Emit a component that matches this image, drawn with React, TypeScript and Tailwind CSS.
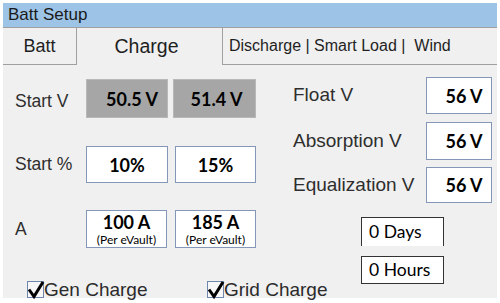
const arial = { fontFamily: '"Liberation Sans", Arial, sans-serif' };

function Box({ children, className = '' }: { children: React.ReactNode; className?: string }) {
  return (
    <div className={`flex items-center justify-center border bg-white border-[#8497b8] text-black font-bold text-[18px] leading-none ${className}`}>
      {children}
    </div>
  );
}

function AmpBox({ value, className = '' }: { value: string; className?: string }) {
  return (
    <div className={`flex flex-col items-center justify-center border bg-white border-[#8497b8] text-black h-[38px] ${className}`}>
      <span className="font-bold text-[18px] leading-[21px]">{value}</span>
      <span className="text-[12px] leading-[14px]">(Per eVault)</span>
    </div>
  );
}

function Check({ label }: { label: string }) {
  return (
    <div className="flex items-center">
      <div className="relative w-[17px] h-[17px] border border-[#6f86ad] bg-[#f7f7f7]">
        <svg className="absolute -left-[1px] -top-[1px] overflow-visible" width="18" height="18" viewBox="0 0 18 18">
          <polyline points="2,8.5 7,15.5 16,1" fill="none" stroke="black" strokeWidth="3" />
        </svg>
      </div>
      <span className="text-[19px] leading-none text-[#2b2b2b]" style={arial}>{label}</span>
    </div>
  );
}

export default function App() {
  return (
    <div className="w-[500px] h-[303px] bg-white pt-[3px] pl-[3px] overflow-hidden" style={{ fontFamily: 'Lato, "Open Sans", sans-serif' }}>
      <div className="w-[494px] h-[295px] bg-[#f0f0f0] flex flex-col">
        {/* title */}
        <div className="h-[25px] bg-[#9dc3e6] border-b border-[#a0a0a0] flex items-center pl-[5px] text-[17px] text-[#1a1a1a]" style={arial}>
          Batt Setup
        </div>

        {/* tabs */}
        <div className="h-[37px] flex text-[#1f1f1f]" style={arial}>
          <div className="w-[74px] border-r border-b border-[#a0a0a0] flex items-center justify-center text-[18px]">Batt</div>
          <div className="w-[145px] flex items-center justify-center pr-[6px] text-[19.5px]">Charge</div>
          <div className="flex-1 border-l border-b border-[#a0a0a0] flex items-center pl-[6px] text-[16px] whitespace-pre">
            Discharge | Smart Load |  Wind
          </div>
        </div>

        {/* content */}
        <div className="flex h-[219px]">
          <div className="w-[277px] flex flex-col text-[#2e2e2e]">
            <div className="flex mt-[14px] h-[39px]">
              <div className="w-[83px] pl-[12px] flex items-center mt-[6px] text-[17.5px]" style={arial}>Start V</div>
              <div className="w-[82px] flex items-center justify-center pl-[10px] bg-[#a6a6a6] border border-[#b8b8b8] text-black font-bold text-[18px] leading-none">50.5 V</div>
              <div className="w-[83px] ml-[5px] flex items-center justify-center pl-[4px] bg-[#a6a6a6] border border-[#b8b8b8] text-black font-bold text-[18px] leading-none">51.4 V</div>
            </div>
            <div className="flex mt-[28px] h-[37px]">
              <div className="w-[83px] pl-[12px] flex items-center text-[17.5px]" style={arial}>Start %</div>
              <Box className="w-[82px]">10%</Box>
              <Box className="w-[81px] ml-[7px]">15%</Box>
            </div>
            <div className="flex mt-[27px] h-[38px]">
              <div className="w-[83px] pl-[12px] flex items-center text-[17.5px]" style={arial}>A</div>
              <AmpBox value="100 A" className="w-[81px]" />
              <AmpBox value="185 A" className="w-[81px] ml-[8px]" />
            </div>
          </div>

          <div className="flex-1 flex flex-col text-[#2e2e2e]">
            <div className="flex mt-[12px] h-[37px]">
              <div className="w-[146px] pl-[13px] flex items-center text-[19px]" style={arial}>Float V</div>
              <Box className="w-[66px] pl-[10px]">56 V</Box>
            </div>
            <div className="flex mt-[8px] h-[38px]">
              <div className="w-[146px] pl-[13px] flex items-center text-[19px]" style={arial}>Absorption V</div>
              <Box className="w-[66px] pl-[10px]">56 V</Box>
            </div>
            <div className="flex mt-[7px] h-[36px]">
              <div className="w-[146px] pl-[13px] flex items-center text-[19px]" style={arial}>Equalization V</div>
              <Box className="w-[66px] pl-[10px]">56 V</Box>
            </div>
            <div className="ml-[81px] mt-[14px] w-[83px] h-[29px] bg-white border-t border-l border-r border-[#333] flex items-center pl-[7px] text-[17.5px] text-black">
              0 Days
            </div>
            <div className="ml-[81px] mt-[10px] w-[83px] h-[28px] bg-white border border-[#333] flex items-center pl-[7px] text-[17.5px] text-black">
              0 Hours
            </div>
          </div>
        </div>

        {/* checkboxes */}
        <div className="flex mt-[-4px] pl-[24px] h-[18px]">
          <div className="w-[180px]">
            <Check label="Gen Charge" />
          </div>
          <Check label="Grid Charge" />
        </div>
      </div>
    </div>
  );
}
